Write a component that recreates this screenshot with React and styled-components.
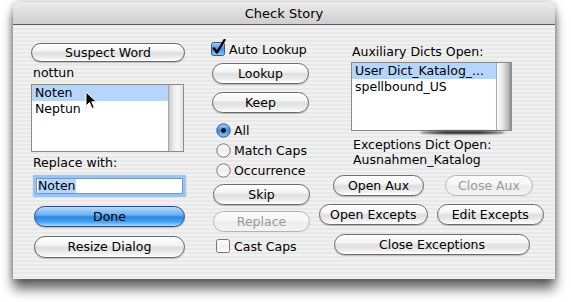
import React from "react";
import styled, { createGlobalStyle, css } from "styled-components";

const Global = createGlobalStyle`
  html, body {
    margin: 0;
    padding: 0;
    background: #ffffff;
    min-height: 302px;
  }
  body {
    font-family: "DejaVu Sans", "Liberation Sans", sans-serif;
    font-size: 12.5px;
    color: #000;
  }
`;

const Page = styled.div`
  min-height: 302px;
  padding: 2px 0 0 13px;
  box-sizing: border-box;
`;

const Window = styled.div`
  width: 542px;
  height: 277px;
  border-radius: 6px 6px 0 0;
  overflow: hidden;
  box-shadow: 0 10px 12px rgba(0, 0, 0, 0.6), 0 0 6px rgba(0, 0, 0, 0.3);
  background: repeating-linear-gradient(
    to bottom,
    #f1f1f1 0px,
    #f1f1f1 2px,
    #e8e8e8 2px,
    #e8e8e8 4px
  );
`;

const TitleBar = styled.div`
  height: 21px;
  border-bottom: 1px solid #5c5c5c;
  background: linear-gradient(to bottom, #ececec, #dcdcdc 50%, #cfcfcf);
  display: flex;
  align-items: center;
  justify-content: center;
  font-size: 13px;
  padding-top: 1px;
`;

const Body = styled.div`
  display: flex;
  padding-left: 18px;
`;

const Column = styled.div`
  display: flex;
  flex-direction: column;
  width: ${(p) => p.$width}px;
  margin-left: ${(p) => p.$left || 0}px;
  padding-top: ${(p) => p.$top}px;
`;

const Text = styled.div`
  height: ${(p) => p.$h || 16}px;
  line-height: ${(p) => p.$h || 16}px;
  margin-top: ${(p) => p.$mt || 0}px;
  margin-left: ${(p) => p.$ml || 0}px;
  white-space: nowrap;
`;

const Button = styled.button`
  font-family: inherit;
  font-size: inherit;
  font-weight: normal;
  color: ${(p) => (p.disabled ? "#9a9a9a" : "#000")};
  height: ${(p) => p.$h || 21}px;
  width: ${(p) => p.$w}px;
  margin-top: ${(p) => p.$mt || 0}px;
  margin-left: ${(p) => p.$ml || 0}px;
  padding: 0 0 1px;
  border-radius: 11px;
  border: 1px solid ${(p) => (p.disabled ? "#b4b4b4" : "#6a6a6a")};
  background: linear-gradient(
    to bottom,
    #ffffff 0%,
    #f4f4f4 40%,
    #dedede 52%,
    #e9e9e9 75%,
    #ffffff 100%
  );
  box-shadow: ${(p) =>
    p.disabled ? "none" : "0 1px 1px rgba(0,0,0,0.22)"};
  ${(p) =>
    p.disabled &&
    css`
      background: linear-gradient(
        to bottom,
        #fbfbfb 0%,
        #f6f6f6 45%,
        #ececec 52%,
        #f3f3f3 100%
      );
    `}
  ${(p) =>
    p.$primary &&
    css`
      border-color: #294b86;
      background: linear-gradient(
        to bottom,
        #b6dcfb 0%,
        #6ab0f1 42%,
        #2a86e6 52%,
        #4aa5f1 80%,
        #a9defc 100%
      );
    `}
`;

const Row = styled.div`
  display: flex;
  align-items: center;
  margin-top: ${(p) => p.$mt || 0}px;
  margin-left: ${(p) => p.$ml || 0}px;
  gap: ${(p) => p.$gap || 0}px;
`;

const ListBox = styled.div`
  position: relative;
  display: flex;
  height: ${(p) => p.$h}px;
  width: ${(p) => p.$w}px;
  margin-top: ${(p) => p.$mt || 0}px;
  margin-left: ${(p) => p.$ml || 0}px;
  border: 1px solid #8a8a8a;
  background: #fff;
  box-sizing: border-box;
`;

const Items = styled.div`
  flex: 1;
  display: flex;
  flex-direction: column;
  box-shadow: inset 0 1px 1px rgba(0, 0, 0, 0.15);
`;

const Item = styled.div`
  height: 16px;
  line-height: 16px;
  padding-left: 3px;
  white-space: nowrap;
  background: ${(p) => (p.$selected ? "#b5d5fd" : "transparent")};
`;

const Track = styled.div`
  width: 14px;
  background: ${(p) =>
    p.$dark
      ? "linear-gradient(to right, #ffffff, #e6e6e6 40%, #b8b8b8 80%, #8c8c8c)"
      : "linear-gradient(to right, #c9c9c9, #e9e9e9 30%, #f6f6f6 60%, #e4e4e4)"};
  border-left: 1px solid #a8a8a8;
`;

const BottomShadow = styled.div`
  position: absolute;
  left: 68px;
  right: 6px;
  bottom: -4px;
  height: 3px;
  border-radius: 50%;
  background: #111;
  filter: blur(0.8px);
`;

const Cursor = styled.svg`
  position: absolute;
  left: 53px;
  top: 6px;
`;

const Field = styled.div`
  margin-top: 4px;
  margin-left: 2px;
  width: 153px;
  height: 22px;
  box-sizing: border-box;
  border-radius: 2px;
  padding: 3px;
  background: #98c5f2;
  box-shadow: 0 0 1px #6fa7e3;
`;

const FieldInner = styled.div`
  height: 100%;
  background: #fff;
  border: 1px solid #7b97c0;
  box-sizing: border-box;
  display: flex;
  align-items: center;
  padding-left: 1px;
`;

const Selection = styled.span`
  background: #b5d5fd;
  line-height: 14px;
`;

const Toggle = styled.label`
  display: flex;
  align-items: center;
  height: 16px;
  gap: 3px;
  margin-top: ${(p) => p.$mt || 0}px;
  margin-left: ${(p) => p.$ml || 0}px;
  white-space: nowrap;
`;

function CheckBox({ checked }) {
  return (
    <svg width="16" height="18" viewBox="0 0 16 18" style={{ marginTop: -2 }}>
      <defs>
        <linearGradient id="cbb" x1="0" y1="0" x2="0" y2="1">
          <stop offset="0" stopColor="#a9d3f7" />
          <stop offset="0.5" stopColor="#3d8fe4" />
          <stop offset="1" stopColor="#8fcaf6" />
        </linearGradient>
        <linearGradient id="cbw" x1="0" y1="0" x2="0" y2="1">
          <stop offset="0" stopColor="#ffffff" />
          <stop offset="0.5" stopColor="#efefef" />
          <stop offset="1" stopColor="#ffffff" />
        </linearGradient>
      </defs>
      <rect
        x="1.5"
        y="3.5"
        width="13"
        height="13"
        rx="2"
        fill={checked ? "url(#cbb)" : "url(#cbw)"}
        stroke={checked ? "#36598f" : "#777"}
      />
      {checked && (
        <path
          d="M4 9.5 L7 13.5 L14.5 1"
          fill="none"
          stroke="#000"
          strokeWidth="2.4"
          strokeLinecap="round"
          strokeLinejoin="round"
        />
      )}
    </svg>
  );
}

function Radio({ checked }) {
  return (
    <svg width="15" height="15" viewBox="0 0 15 15">
      <defs>
        <linearGradient id="rb" x1="0" y1="0" x2="0" y2="1">
          <stop offset="0" stopColor="#a9d3f7" />
          <stop offset="0.5" stopColor="#3d8fe4" />
          <stop offset="1" stopColor="#8fcaf6" />
        </linearGradient>
        <linearGradient id="rw" x1="0" y1="0" x2="0" y2="1">
          <stop offset="0" stopColor="#ffffff" />
          <stop offset="0.5" stopColor="#eeeeee" />
          <stop offset="1" stopColor="#ffffff" />
        </linearGradient>
      </defs>
      <circle
        cx="7.5"
        cy="7.5"
        r="6.7"
        fill={checked ? "url(#rb)" : "url(#rw)"}
        stroke={checked ? "#36598f" : "#777"}
      />
      {checked && <circle cx="7.5" cy="7.5" r="2.4" fill="#111" />}
    </svg>
  );
}

export default function App() {
  return (
    <Page>
      <Global />
      <Window>
        <TitleBar>Check Story</TitleBar>
        <Body>
          <Column $width={156} $top={18}>
            <Button $w={154} $h={19}>Suspect Word</Button>
            <Text $mt={3} $ml={2}>nottun</Text>
            <ListBox $w={153} $h={68} $mt={3}>
              <Items>
                <Item $selected>Noten</Item>
                <Item>Neptun</Item>
              </Items>
              <Track />
              <Cursor width="12" height="19" viewBox="0 0 12 19">
                <path
                  d="M1 1 L1 15 L4.5 11.5 L7 17.5 L9.3 16.5 L6.8 10.8 L11.5 10.8 Z"
                  fill="#000"
                  stroke="#fff"
                  strokeWidth="1"
                  strokeLinejoin="round"
                />
              </Cursor>
            </ListBox>
            <Text $mt={3} $ml={2}>Replace with:</Text>
            <Field>
              <FieldInner>
                <Selection>Noten</Selection>
              </FieldInner>
            </Field>
            <Button $primary $w={151} $mt={9} $ml={3}>Done</Button>
            <Button $w={151} $h={22} $mt={9} $ml={3}>Resize Dialog</Button>
          </Column>

          <Column $width={101} $left={23} $top={16}>
            <Toggle>
              <CheckBox checked />
              Auto Lookup
            </Toggle>
            <Button $w={97} $mt={6} $ml={2}>Lookup</Button>
            <Button $w={97} $mt={8} $ml={2}>Keep</Button>
            <Toggle $mt={9} $ml={6}>
              <Radio checked />
              All
            </Toggle>
            <Toggle $mt={4} $ml={6}>
              <Radio />
              Match Caps
            </Toggle>
            <Toggle $mt={4} $ml={6}>
              <Radio />
              Occurrence
            </Toggle>
            <Button $w={97} $mt={6} $ml={3}>Skip</Button>
            <Button disabled $w={97} $mt={6} $ml={3}>Replace</Button>
            <Toggle $mt={6} $ml={5}>
              <CheckBox />
              Cast Caps
            </Toggle>
          </Column>

          <Column $width={225} $left={8} $top={19}>
            <Text $ml={33}>Auxiliary Dicts Open:</Text>
            <ListBox $w={161} $h={69} $mt={2} $ml={32}>
              <Items>
                <Item $selected>User Dict_Katalog_...</Item>
                <Item>spellbound_US</Item>
              </Items>
              <Track $dark />
              <BottomShadow />
            </ListBox>
            <Text $mt={6} $ml={34} $h={15}>Exceptions Dict Open:</Text>
            <Text $ml={34} $h={15}>Ausnahmen_Katalog</Text>
            <Row $mt={8} $ml={14} $gap={21}>
              <Button $w={91}>Open Aux</Button>
              <Button disabled $w={88}>Close Aux</Button>
            </Row>
            <Row $mt={8} $gap={9}>
              <Button $w={109}>Open Excepts</Button>
              <Button $w={108}>Edit Excepts</Button>
            </Row>
            <Row $mt={9} $ml={15}>
              <Button $w={196}>Close Exceptions</Button>
            </Row>
          </Column>
        </Body>
      </Window>
    </Page>
  );
}
